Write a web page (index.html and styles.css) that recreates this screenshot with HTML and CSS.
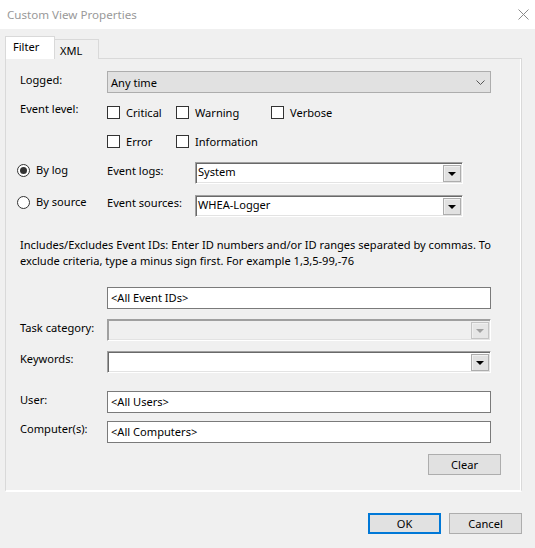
FILE: index.html
```html
<!DOCTYPE html>
<html>
<head>
<meta charset="utf-8">
<link rel="stylesheet" href="styles.css">
</head>
<body>
<div class="window">
  <div class="titlebar">
    <span class="title">Custom View Properties</span>
    <svg class="close" width="11" height="11" viewBox="0 0 11 11"><path d="M0.5 0.5 L10.5 10.5 M10.5 0.5 L0.5 10.5" stroke="#8a8a8a" stroke-width="1" fill="none"/></svg>
  </div>
  <div class="client">
    <div class="tabs">
      <div class="tab active">Filter</div>
      <div class="tab">XML</div>
    </div>
    <div class="panel">
      <div class="row row-logged">
        <div class="lbl">Logged:</div>
        <div class="combo flat">
          <span class="combo-text">Any time</span>
          <svg class="chev" width="9" height="5" viewBox="0 0 9 5"><path d="M0.5 0.5 L4.5 4.5 L8.5 0.5" stroke="#555" fill="none" stroke-width="1"/></svg>
        </div>
      </div>

      <div class="row row-level">
        <div class="lbl">Event level:</div>
        <div class="checks">
          <label class="chk"><span class="box"></span>Critical</label>
          <label class="chk"><span class="box"></span>Warning</label>
          <label class="chk"><span class="box"></span>Verbose</label>
          <label class="chk"><span class="box"></span>Error</label>
          <label class="chk"><span class="box"></span>Information</label>
        </div>
      </div>

      <div class="row row-src first">
        <div class="radio-col"><span class="radio on"></span>By log</div>
        <div class="lbl2">Event logs:</div>
        <div class="sunken">
          <span class="combo-text">System</span>
          <span class="dbtn"><span class="tri"></span></span>
        </div>
      </div>
      <div class="row row-src second">
        <div class="radio-col"><span class="radio"></span>By source</div>
        <div class="lbl2">Event sources:</div>
        <div class="sunken">
          <span class="combo-text">WHEA-Logger</span>
          <span class="dbtn"><span class="tri"></span></span>
        </div>
      </div>

      <p class="note">Includes/Excludes Event IDs: Enter ID numbers and/or ID ranges separated by commas. To<br>exclude criteria, type a minus sign first. For example 1,3,5-99,-76</p>

      <div class="row row-ids">
        <div class="lbl"></div>
        <div class="text-input">&lt;All Event IDs&gt;</div>
      </div>

      <div class="row row-task">
        <div class="lbl">Task category:</div>
        <div class="sunken wide disabled">
          <span class="combo-text"></span>
          <span class="dbtn"><span class="tri"></span></span>
        </div>
      </div>

      <div class="row row-kw">
        <div class="lbl">Keywords:</div>
        <div class="sunken wide">
          <span class="combo-text"></span>
          <span class="dbtn"><span class="tri"></span></span>
        </div>
      </div>

      <div class="row row-user">
        <div class="lbl">User:</div>
        <div class="text-input">&lt;All Users&gt;</div>
      </div>

      <div class="row row-comp">
        <div class="lbl">Computer(s):</div>
        <div class="text-input">&lt;All Computers&gt;</div>
      </div>

      <div class="clear-row">
        <div class="btn">Clear</div>
      </div>
    </div>
    <div class="footer">
      <div class="btn default">OK</div>
      <div class="btn">Cancel</div>
    </div>
  </div>
</div>
</body>
</html>
```

FILE: styles.css
```css
* { box-sizing: border-box; }
html, body { margin: 0; padding: 0; }
body {
  font-family: "Noto Sans", "Liberation Sans", sans-serif;
  font-size: 11.1px;
  line-height: 16px;
  color: #000;
  background: #f0f0f0;
}
.window {
  width: 535px;
  height: 548px;
  background: #f0f0f0;
  overflow: hidden;
}
.titlebar {
  height: 29px;
  background: #fff;
  display: flex;
  align-items: center;
  justify-content: space-between;
  padding: 0 6px 0 7px;
}
.title {
  color: #999;
  font-size: 11.6px;
}
.close { margin-top: -1px; }

.client {
  padding: 7px 13px 0 5px;
}
.tabs {
  display: flex;
  align-items: flex-end;
  height: 23px;
  position: relative;
  z-index: 1;
}
.tab {
  border: 1px solid #d9d9d9;
  border-bottom: none;
  background: #f0f0f0;
  height: 20px;
  padding: 0 5px;
  line-height: 20px;
}
.tab.active {
  background: #fff;
  height: 23px;
  width: 50px;
  padding-left: 7px;
}
.tab:not(.active) {
  width: 44px;
  border-left: none;
  padding-top: 1px;
  padding-left: 5px;
}
.panel {
  border: 1px solid #d9d9d9;
  border-bottom: 2px solid #fff;
  box-shadow: inset -1px 0 #fff;
  height: 434px;
  margin-top: -1px;
  padding: 0 20px 0 14px;
  display: flex;
  flex-direction: column;
}
.row {
  display: flex;
  align-items: flex-start;
}
.lbl {
  width: 87px;
  flex: none;
}
.combo.flat {
  width: 384px;
  height: 22px;
  background: #e1e1e1;
  border: 1px solid #adadad;
  display: flex;
  align-items: center;
  justify-content: space-between;
  padding: 0 4px 0 3px;
}
.combo.flat .combo-text { padding-top: 1px; }
.chev { margin-right: 1px; }
.row-logged { margin-top: 12px; }
.row-logged .lbl { padding-top: 1px; }

.row-level { margin-top: 8px; }
.checks {
  display: grid;
  grid-template-columns: 69px 95px auto;
  grid-auto-rows: 16px;
  row-gap: 13px;
  padding-top: 3px;
}
.chk {
  display: flex;
  align-items: center;
  white-space: nowrap;
  padding-top: 1px;
}
.box {
  width: 13px;
  height: 13px;
  border: 1px solid #333;
  background: #fff;
  margin-right: 6px;
  margin-top: -1px;
  flex: none;
}

.row-src { height: 22px; }
.row-src.first { margin-top: 13px; }
.row-src.second { margin-top: 11px; }
.radio-col {
  width: 90px;
  margin-left: -3px;
  display: flex;
  align-items: center;
  flex: none;
}
.radio {
  width: 13px;
  height: 13px;
  border: 1px solid #333;
  border-radius: 50%;
  background: #fff;
  margin-right: 6px;
  position: relative;
  flex: none;
}
.radio.on::after {
  content: "";
  position: absolute;
  left: 2px;
  top: 2px;
  width: 7px;
  height: 7px;
  border-radius: 50%;
  background: #333;
}
.lbl2 {
  width: 88px;
  flex: none;
  padding-top: 1px;
}
.second .lbl2, .second .radio-col { margin-top: -1px; }
.sunken {
  width: 268px;
  height: 22px;
  background: #fff;
  border-top: 1px solid #a0a0a0;
  border-left: 1px solid #a0a0a0;
  border-right: 1px solid #fff;
  border-bottom: 1px solid #fff;
  box-shadow: inset 1px 1px #696969, inset -1px -1px #e3e3e3;
  display: flex;
  align-items: center;
  justify-content: space-between;
  padding: 0 1px 0 2px;
}
.sunken .combo-text { margin-top: -2px; }
.sunken .dbtn { margin-top: 1px; }
.sunken.wide { width: 384px; }
.sunken.disabled {
  background: #f0f0f0;
  box-shadow: inset 1px 1px #a0a0a0, inset -1px -1px #e3e3e3;
}
.combo-text { line-height: 16px; }
.dbtn {
  width: 18px;
  height: 17px;
  background: #e1e1e1;
  border: 1px solid #adadad;
  box-shadow: inset 1px 1px #f0f0f0;
  display: flex;
  align-items: center;
  justify-content: center;
}
.tri {
  width: 0;
  height: 0;
  border-left: 4px solid transparent;
  border-right: 4px solid transparent;
  border-top: 4px solid #000;
  margin-top: 1px;
}
.disabled .tri { border-top-color: #a0a0a0; }
.disabled .dbtn { background: #e6e6e6; border-color: #c4c4c4; }

.note {
  margin: 20px 0 0 0;
  white-space: nowrap;
}

.text-input {
  width: 384px;
  height: 22px;
  background: #fff;
  border: 1px solid #7a7a7a;
  padding: 2px 3px 0 3px;
  line-height: 16px;
}
.row-ids { margin-top: 18px; }
.row-task { margin-top: 10px; }
.row-task .lbl { padding-top: 1px; }
.row-kw { margin-top: 10px; }
.row-user { margin-top: 18px; }
.row-user .lbl { padding-top: 1px; }
.row-comp { margin-top: 8px; }

.clear-row {
  display: flex;
  justify-content: flex-end;
  margin-top: 11px;
}
.btn {
  width: 73px;
  height: 21px;
  background: #e1e1e1;
  border: 1px solid #adadad;
  display: flex;
  align-items: center;
  justify-content: center;
}
.footer {
  display: flex;
  justify-content: flex-end;
  gap: 8px;
  margin-top: 21px;
}
.btn.default {
  border: 2px solid #0078d7;
}
```
